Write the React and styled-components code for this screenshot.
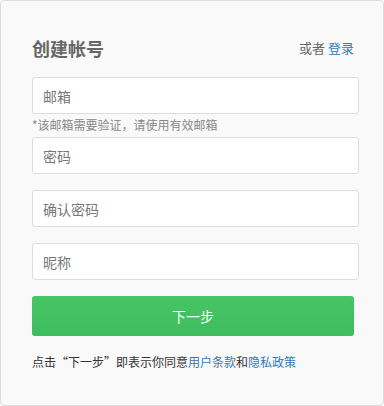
import React from 'react'
import styled, { createGlobalStyle } from 'styled-components'

const GlobalStyle = createGlobalStyle`
  html, body {
    margin: 0;
    padding: 0;
    background: #ffffff;
  }
  body {
    font-family: "Noto Sans CJK SC", "Liberation Sans", sans-serif;
  }
  * {
    box-sizing: border-box;
  }
`

const fields = [
  { name: 'email', type: 'text', label: '邮箱', hint: '*该邮箱需要验证，请使用有效邮箱' },
  { name: 'password', type: 'password', label: '密码' },
  { name: 'confirm', type: 'password', label: '确认密码' },
  { name: 'nickname', type: 'text', label: '昵称' },
]

export default () => {
  return (
    <>
      <GlobalStyle />
      <Card>
        <Header>
          <Title>创建帐号</Title>
          <LoginHint>
            或者 <Link href="#">登录</Link>
          </LoginHint>
        </Header>
        <Form onSubmit={(e) => e.preventDefault()}>
          {fields.map((f, i) => (
            <Field key={f.name} $first={i === 0} $afterHint={i > 0 && !!fields[i - 1].hint}>
              <Input type={f.type} name={f.name} placeholder={f.label} />
              {f.hint && <Hint>{f.hint}</Hint>}
            </Field>
          ))}
          <NextBtn type="submit">下一步</NextBtn>
        </Form>
        <Terms>
          点击“下一步”即表示你同意<Link href="#">用户条款</Link>和<Link href="#">隐私政策</Link>
        </Terms>
      </Card>
    </>
  )
}

const Card = styled.div`
  width: 384px;
  height: 406px;
  padding: 35px 29px 0 31px;
  background: #f9f9f9;
  border: 1px solid #dcdcdc;
  border-radius: 4px;
`

const Header = styled.div`
  display: flex;
  justify-content: space-between;
  align-items: center;
  height: 24px;
`

const Title = styled.h1`
  margin: 0;
  font-size: 18px;
  line-height: 24px;
  font-weight: bold;
  color: #666666;
`

const LoginHint = styled.span`
  font-size: 13px;
  line-height: 24px;
  color: #666666;
`

const Link = styled.a`
  color: #337ab7;
  text-decoration: none;
`

const Form = styled.form`
  display: flex;
  flex-direction: column;
  margin-top: 17px;
`

const Field = styled.div`
  margin-top: ${(p) => (p.$first ? '0' : p.$afterHint ? '4px' : '16px')};
`

const Input = styled.input`
  display: block;
  width: calc(100% + 5px);
  height: 37px;
  padding: 0 10px;
  font-family: inherit;
  font-size: 14px;
  color: #333333;
  background: #ffffff;
  border: 1px solid #dddddd;
  border-radius: 3px;
  outline: none;

  &::placeholder {
    color: #777777;
  }
`

const Hint = styled.div`
  margin-top: 3px;
  font-size: 12px;
  line-height: 16px;
  color: #888888;
`

const NextBtn = styled.button`
  margin-top: 16px;
  height: 40px;
  width: 100%;
  font-family: inherit;
  font-size: 14px;
  color: #ffffff;
  background: linear-gradient(#47c565, #3fbc5d);
  border: none;
  border-radius: 3px;
  cursor: pointer;
`

const Terms = styled.p`
  margin: 17px 0 0;
  font-size: 12px;
  line-height: 18px;
  color: #333333;
`
